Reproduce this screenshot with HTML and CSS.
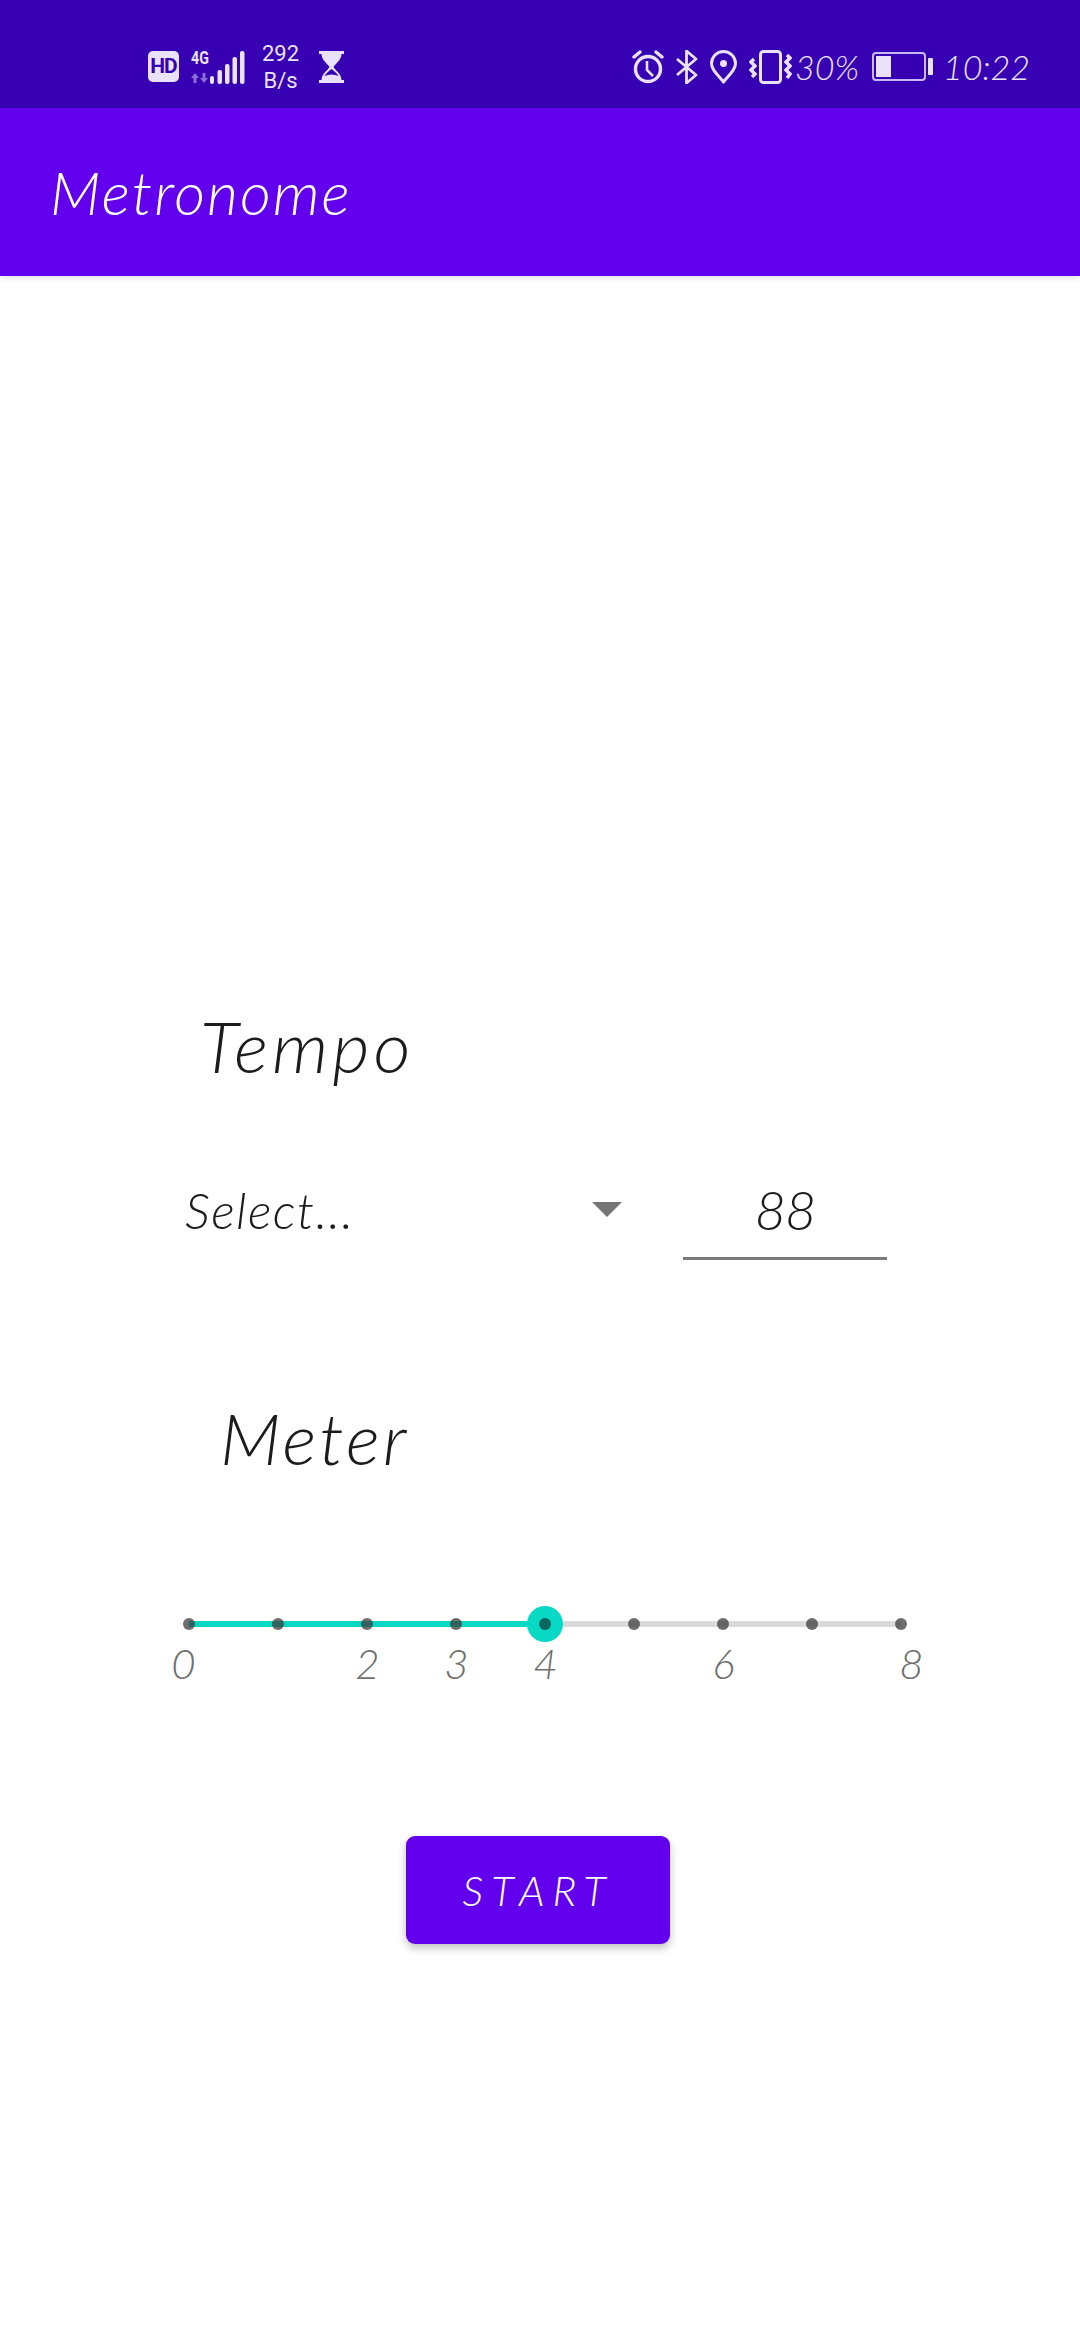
FILE: index.html
```html
<!DOCTYPE html>
<html lang="en">
<head>
    <meta charset="UTF-8">
    <meta name="viewport" content="width=device-width, initial-scale=1.0">
    <title>Metronome</title>
    <link rel="stylesheet" href="styles.css">
</head>
<body>
    <div class="status-bar">
        <div class="status-left">
            <span class="hd-badge">HD</span>
            <div class="network">
                <span class="net-type">4G</span>
                <svg class="net-arrows" width="18" height="10" viewBox="0 0 18 10">
                    <path d="M4 0 L8 5 H5.500 V10 H2.500 V5 H0 Z M13 10 L9 5 H11.500 V0 H14.500 V5 H17 Z" fill="#8a6fd6"/>
                </svg>
            </div>
            <svg class="signal" width="35" height="34" viewBox="0 0 35 34">
                <rect x="0" y="26" width="4" height="8" rx="2" fill="#eae2fb"/>
                <rect x="7.500" y="20" width="4.500" height="14" rx="2" fill="#eae2fb"/>
                <rect x="15" y="14" width="4.500" height="20" rx="2" fill="#eae2fb"/>
                <rect x="22.500" y="7" width="4.500" height="27" rx="2" fill="#eae2fb"/>
                <rect x="30" y="1" width="4.500" height="33" rx="2" fill="#eae2fb"/>
            </svg>
            <div class="speed"><span>292</span><span>B/s</span></div>
            <svg class="hourglass" width="25" height="32" viewBox="0 0 25 32">
                <path d="M0 0 H25 V3 H22.500 C22.500 9 17 12 14.500 16 C17 20 22.500 23 22.500 29 H25 V32 H0 V29 H2.500 C2.500 23 8 20 10.500 16 C8 12 2.500 9 2.500 3 H0 Z" fill="#eae2fb"/>
                <path d="M5.500 25 C7 22 10 20 12.500 18 C15 20 18 22 19.500 25 C15 23 10 23 5.500 25 Z" fill="#3700b3"/>
            </svg>
        </div>
        <div class="status-right">
            <svg width="32" height="34" viewBox="0 0 32 34" fill="none" stroke="#eae2fb" stroke-width="3.400">
                <circle cx="16" cy="19" r="12.500"/>
                <path d="M15 11 V20 L21 26" stroke-width="2.600"/>
                <path d="M2 7 L8 2 M30 7 L24 2" stroke-linecap="round"/>
            </svg>
            <svg width="22" height="34" viewBox="0 0 22 34" fill="none" stroke="#eae2fb" stroke-width="2.800">
                <path d="M1 9 L20 25 L10.500 33 V1 L20 9 L1 25" stroke-linejoin="round"/>
            </svg>
            <svg width="27" height="34" viewBox="0 0 27 34" fill="none" stroke="#eae2fb" stroke-width="3">
                <path d="M13.500 32 C8 25 1.500 20 1.500 13.500 A12 12 0 0 1 25.500 13.500 C25.500 20 19 25 13.500 32 Z" stroke-linejoin="round"/>
                <circle cx="13.500" cy="13.500" r="3.500" fill="#eae2fb" stroke="none"/>
            </svg>
            <svg width="43" height="34" viewBox="0 0 43 34" fill="none" stroke="#eae2fb" stroke-width="3">
                <rect x="11.500" y="1.500" width="20" height="31" rx="3"/>
                <path d="M5 9 L2 12 L6 16 L2 20 L6 24 L3 27" stroke-width="3.400"/>
                <path d="M38 5 L41 8 L37 12 L41 16 L37 20 L41 24 L38 28" stroke-width="3.400"/>
            </svg>
            <span class="status-text pct">30%</span>
            <div class="battery">
                <div class="battery-body"><div class="battery-fill"></div></div>
                <div class="battery-cap"></div>
            </div>
            <span class="status-text clock">10:22</span>
        </div>
    </div>

    <header class="app-bar">
        <h1>Metronome</h1>
    </header>

    <main class="content">
        <h2 class="heading tempo-heading">Tempo</h2>
        <div class="tempo-row">
            <div class="spinner">
                <span>Select...</span>
                <span class="arrow"></span>
            </div>
            <div class="tempo-input">88</div>
        </div>

        <h2 class="heading meter-heading">Meter</h2>
        <div class="slider">
            <div class="track">
                <div class="track-active"></div>
                <div class="ticks">
                    <span class="tick"></span>
                    <span class="tick"></span>
                    <span class="tick"></span>
                    <span class="tick"></span>
                    <span class="tick"></span>
                    <span class="tick"></span>
                    <span class="tick"></span>
                    <span class="tick"></span>
                    <span class="tick"></span>
                </div>
                <div class="thumb"><span></span></div>
            </div>
            <div class="labels">
                <span class="shift-left">0</span>
                <span></span>
                <span>2</span>
                <span>3</span>
                <span>4</span>
                <span></span>
                <span>6</span>
                <span></span>
                <span class="shift-right">8</span>
            </div>
        </div>

        <button class="start-btn">START</button>
    </main>
</body>
</html>
```

FILE: styles.css
```css
body {
    margin: 0;
    height: 2340px;
    background: #fff;
    font-family: Lato, sans-serif;
    font-style: italic;
    font-weight: 300;
    color: #1c1c1c;
    overflow: hidden;
}

/* status bar */
.status-bar {
    height: 108px;
    box-sizing: border-box;
    background: #3700b3;
    color: #eae2fb;
    display: flex;
    justify-content: space-between;
    align-items: center;
    padding: 25px 50px 0 148px;
    font-style: normal;
    font-weight: 400;
    font-family: Roboto, sans-serif;
}
.status-left, .status-right {
    display: flex;
    align-items: center;
}
.status-right {
    gap: 12px;
}
.hd-badge {
    width: 31px;
    height: 31px;
    background: #eae2fb;
    color: #3700b3;
    border-radius: 5px;
    font-size: 21px;
    font-weight: 700;
    line-height: 31px;
    text-align: center;
    letter-spacing: -1px;
}
.network {
    display: flex;
    flex-direction: column;
    align-items: center;
    margin-left: 12px;
    width: 18px;
    gap: 8px;
}
.net-type {
    font-size: 19px;
    font-weight: 700;
    line-height: 15px;
    transform: scaleX(0.75);
}
.signal {
    margin-left: 1px;
}
.speed {
    display: flex;
    flex-direction: column;
    align-items: center;
    margin-left: 17px;
    font-size: 22px;
    line-height: 27px;
}
.hourglass {
    margin-left: 20px;
}
.status-text {
    font-family: Lato, sans-serif;
    font-weight: 300;
    font-style: italic;
    font-size: 34px;
    line-height: 36px;
}
.pct {
    margin-left: -9px;
}
.clock {
    margin-left: -2px;
}
.battery {
    display: flex;
    align-items: center;
    gap: 2px;
    margin-left: 1px;
}
.battery-body {
    width: 54px;
    height: 29px;
    box-sizing: border-box;
    border: 2px solid #c9b8f2;
    border-radius: 4px;
    padding: 2px;
}
.battery-fill {
    width: 15px;
    height: 100%;
    background: #eae2fb;
}
.battery-cap {
    width: 5px;
    height: 17px;
    background: #eae2fb;
    border-radius: 1px;
}

/* app bar */
.app-bar {
    position: relative;
    height: 168px;
    background: #6200ee;
    display: flex;
    align-items: center;
    padding-left: 50px;
    box-shadow: 0 2px 6px rgba(0, 0, 0, 0.12);
}
h1 {
    margin: 0;
    color: #fff;
    font-size: 60px;
    font-weight: 300;
    letter-spacing: 2px;
}

/* main content */
.content {
    display: flex;
    flex-direction: column;
    padding-top: 724px;
}
.heading {
    margin: 0;
    font-weight: 300;
    font-size: 72px;
    line-height: 90px;
    letter-spacing: 4px;
}
.tempo-heading {
    padding-left: 200px;
}
.meter-heading {
    padding-left: 220px;
    margin-top: 132px;
    letter-spacing: 3px;
}
.tempo-row {
    display: flex;
    align-items: flex-end;
    margin-top: 84px;
    padding-left: 185px;
}
.spinner {
    width: 437px;
    display: flex;
    justify-content: space-between;
    align-items: center;
    font-size: 50px;
    letter-spacing: 1.500px;
    height: 71px;
    padding-bottom: 15px;
}
.arrow {
    width: 0;
    height: 0;
    border-left: 15px solid transparent;
    border-right: 15px solid transparent;
    border-top: 15px solid #757575;
}
.tempo-input {
    width: 204px;
    margin-left: 61px;
    height: 82px;
    border-bottom: 3px solid #7b7b7b;
    text-align: center;
    font-size: 54px;
    letter-spacing: -1px;
    line-height: 70px;
}

/* slider */
.slider {
    margin: 139px 0 0 189px;
    width: 712px;
}
.track {
    position: relative;
    height: 6px;
    background: #dadada;
}
.track-active {
    width: 356px;
    height: 100%;
    background: #08d9c4;
}
.ticks {
    position: absolute;
    inset: -3px -6px;
    display: flex;
    justify-content: space-between;
}
.tick {
    width: 12px;
    height: 12px;
    border-radius: 50%;
    background: rgba(60, 60, 60, 0.75);
}
.thumb {
    position: absolute;
    left: 338px;
    top: -15px;
    width: 36px;
    height: 36px;
    border-radius: 50%;
    background: #08d9c4;
    display: flex;
    align-items: center;
    justify-content: center;
}
.thumb span {
    width: 12px;
    height: 12px;
    border-radius: 50%;
    background: #04665c;
}
.labels {
    display: grid;
    grid-template-columns: repeat(9, 89px);
    margin: 11px 0 0 -44px;
    color: #6f6f6f;
    font-size: 42px;
    font-weight: 300;
    line-height: 50px;
    text-align: center;
}
.shift-left {
    transform: translateX(-6px);
}
.shift-right {
    transform: translateX(10px);
}

/* button */
.start-btn {
    align-self: flex-start;
    margin: 148px 0 0 406px;
    width: 264px;
    height: 108px;
    border: 0;
    border-radius: 9px;
    background: #6200ee;
    color: #fff;
    font-family: inherit;
    font-style: italic;
    font-weight: 300;
    font-size: 42px;
    letter-spacing: 8px;
    box-shadow: 0 4px 8px rgba(0, 0, 0, 0.25);
}
```
